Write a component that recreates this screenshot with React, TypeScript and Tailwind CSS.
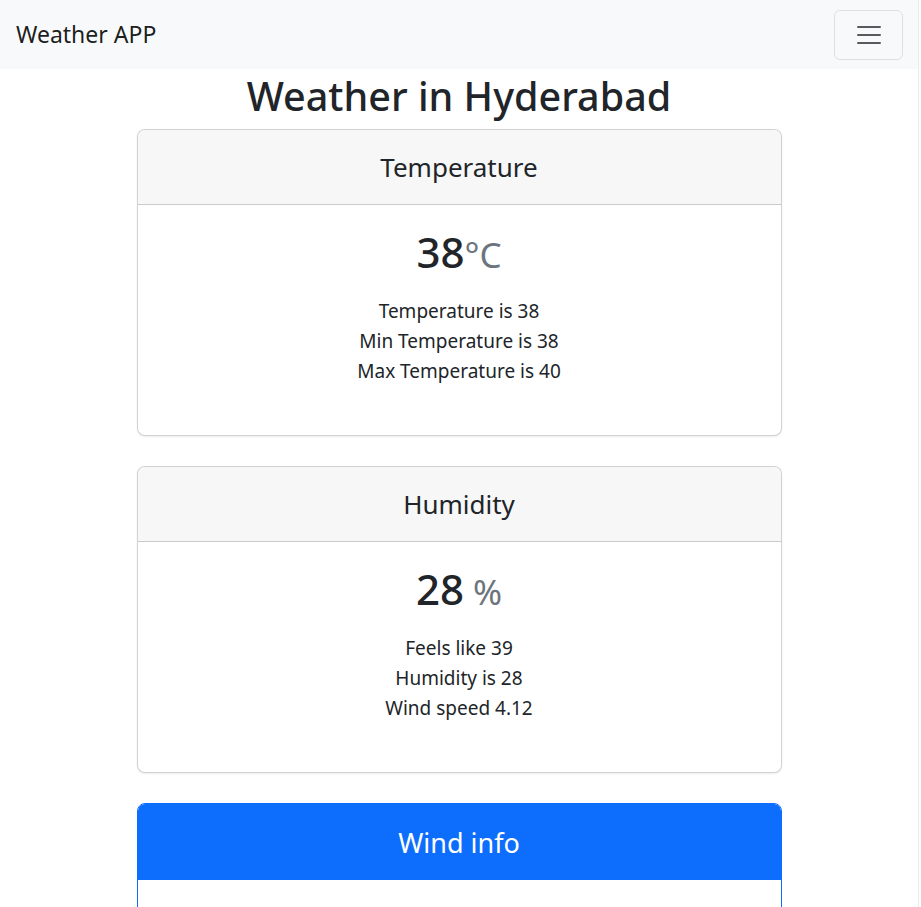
import React from 'react';

const font = { fontFamily: '"Noto Sans", "Open Sans", sans-serif' };

type Info = {
  title: string;
  value: string;
  unit: string;
  lines: string[];
};

const cards: Info[] = [
  {
    title: 'Temperature',
    value: '38',
    unit: '°C',
    lines: ['Temperature is 38', 'Min Temperature is 38', 'Max Temperature is 40'],
  },
  {
    title: 'Humidity',
    value: '28',
    unit: ' %',
    lines: ['Feels like 39', 'Humidity is 28', 'Wind speed 4.12'],
  },
];

function InfoCard({ info }: { info: Info }) {
  return (
    <div className="w-full border border-black/[0.175] rounded-lg bg-white overflow-hidden shadow-[0_1px_2px_rgba(0,0,0,0.075)]">
      <div className="h-[75px] bg-[#f7f7f7] border-b border-black/[0.175] flex items-center justify-center">
        <h3 className="text-[26px] text-[#212529] leading-none">{info.title}</h3>
      </div>
      <div className="pt-[19px] pb-[49px] flex flex-col items-center text-[#212529]">
        <div className="leading-[56px] whitespace-pre">
          <span className="text-[42px] font-medium">{info.value}</span>
          <span className="text-[35px] text-[#6c757d]">{info.unit}</span>
        </div>
        <div className="mt-[6px] flex flex-col items-center text-[19px] leading-[30px]">
          {info.lines.map(l => (
            <p key={l}>{l}</p>
          ))}
        </div>
      </div>
    </div>
  );
}

export default function App() {
  return (
    <div className="w-[919px] h-[907px] overflow-hidden bg-white border-r border-[#ececec]" style={font}>
      <nav className="h-[69px] bg-[#f8f9fa] flex items-center justify-between pl-4 pr-[15px]">
        <span className="text-[23px] text-black/90">Weather APP</span>
        <button className="w-[69px] h-[50px] border border-black/10 rounded-md flex items-center justify-center">
          <svg width="30" height="30" viewBox="0 0 30 30">
            <path
              d="M4 7h22M4 15h22M4 23h22"
              stroke="rgba(33,37,41,0.75)"
              strokeWidth="2"
              strokeLinecap="round"
            />
          </svg>
        </button>
      </nav>

      <main className="flex flex-col items-center">
        <h1 className="text-[39.5px] font-medium leading-[48px] text-[#212529] mt-[3px]">
          Weather in Hyderabad
        </h1>
        <div className="w-[645px] mt-[9px] flex flex-col gap-[30px]">
          {cards.map(c => (
            <InfoCard key={c.title} info={c} />
          ))}
          <div className="w-full border border-[#0d6efd] rounded-lg overflow-hidden h-[160px]">
            <div className="h-[76px] bg-[#0d6efd] flex items-center justify-center">
              <h3 className="text-[27px] text-white leading-none">Wind info</h3>
            </div>
          </div>
        </div>
      </main>
    </div>
  );
}
